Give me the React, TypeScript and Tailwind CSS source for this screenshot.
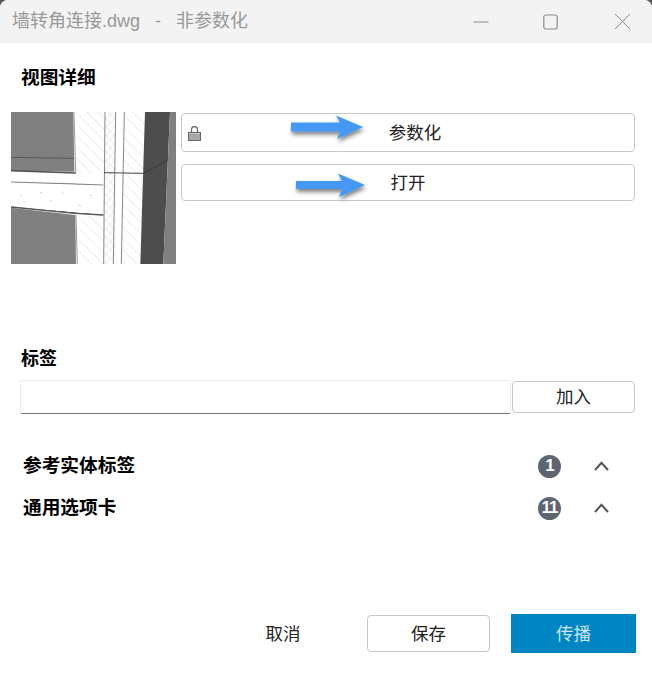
const serif = '"Liberation Serif", "Noto Sans CJK SC", serif';

function Arrow({ className, d }: { className: string; d: string }) {
  return (
    <svg className={`absolute pointer-events-none ${className}`} width="80" height="32" viewBox="0 0 80 32">
      <defs>
        <filter id="arrowShadow" x="-20%" y="-40%" width="140%" height="200%">
          <feDropShadow dx="1" dy="3" stdDeviation="2" floodColor="#000" floodOpacity="0.5" />
        </filter>
      </defs>
      <path d={d} fill="#4499f5" filter="url(#arrowShadow)" />
    </svg>
  );
}

function Thumbnail() {
  return (
    <svg width="165" height="152" viewBox="33 21 495 456" className="shrink-0">
      <defs>
        <pattern id="hatch" width="24" height="24" patternUnits="userSpaceOnUse" patternTransform="rotate(-45)">
          <line x1="0" y1="0" x2="0" y2="24" stroke="#d2d2d2" strokeWidth="2.5" />
        </pattern>
        <pattern id="cross" width="18" height="18" patternUnits="userSpaceOnUse" patternTransform="rotate(45)">
          <path d="M0 0V18M0 0H18" stroke="#d6d6d6" strokeWidth="2.5" fill="none" />
        </pattern>
      </defs>
      <rect x="33" y="21" width="495" height="456" fill="#fff" />
      {/* walls */}
      <path d="M33 21H220L223 200L33 197Z" fill="#808080" />
      <path d="M33 157L221 160" stroke="#444" strokeWidth="2" />
      <path d="M33 308L226 330L228 477H33Z" fill="#808080" />
      <path d="M228 21H315V205H228Z M235 330H310V477H235Z" fill="url(#hatch)" />
      <path d="M315 21H347V477H310V205Z" fill="url(#cross)" />
      <path d="M372 21H435V205H372Z M368 205H430L422 477H362Z" fill="url(#hatch)" />
      {/* right block */}
      <path d="M435 21H510L490 477H421Z" fill="#4d4d4d" />
      <path d="M510 21H528V477H490Z" fill="#808080" />
      <path d="M432 204L503 165" stroke="#2e2e2e" strokeWidth="2" />
      {/* beam edges and speckle */}
      <path d="M33 197L228 204" stroke="#555" strokeWidth="5" />
      <path d="M33 231L228 237L310 240" stroke="#444" strokeWidth="2" />
      <path d="M33 306L225 325L311 330" stroke="#555" strokeWidth="4" />
      <path d="M60 270l6 3M120 262l8 4M185 262l6 4M235 300l8 3M70 290l5 2M150 285l5 3M270 270l6 2" stroke="#d0d0d0" strokeWidth="3" />
      <path d="M222 21L227 205M228 330L232 477" stroke="#999" strokeWidth="3" />
      <path d="M315 21L311 477M347 21L340 477M373 21L364 477" stroke="#888" strokeWidth="3" />
      <path d="M312 203L431 205" stroke="#444" strokeWidth="3" />
    </svg>
  );
}

function LockIcon() {
  return (
    <svg width="13" height="15" viewBox="0 0 13 15" className="shrink-0">
      <path d="M3.5 6.5V3.5a3 3 0 0 1 6 0V6.5" fill="none" stroke="#666" strokeWidth="1.3" />
      <rect x="0.5" y="6.5" width="12" height="8" fill="#c4c4c4" stroke="#666" />
      <path d="M1 9H12M1 11H12M1 13H12" stroke="#8a8a8a" />
    </svg>
  );
}

function CountRow({ label, count }: { label: string; count: number }) {
  return (
    <div className="flex items-center h-6 ml-[12px] pr-[26px]">
      <span className="flex-1 text-[18.7px] font-bold text-black pt-px">{label}</span>
      <span
        className="w-[23px] h-[23px] rounded-full bg-[#5c6570] text-white text-[17px] font-bold flex items-center justify-center tracking-[-1px]"
        style={{ fontFamily: '"Liberation Sans", sans-serif' }}
      >
        {count}
      </span>
      <svg width="15" height="10" viewBox="0 0 15 10" className="ml-[33px]">
        <path d="M1 9L7.5 1.8L14 9" fill="none" stroke="#555" strokeWidth="2" />
      </svg>
    </div>
  );
}

export default function App() {
  return (
    <div className="h-screen bg-[#555]" style={{ fontFamily: serif }}>
      <div className="h-full bg-white rounded-t-[8px] overflow-hidden flex flex-col">
        {/* Title bar */}
        <div className="h-[43px] shrink-0 bg-[#f3f3f3] flex items-center pl-[12px] text-[#999] text-[18px]" style={{ fontFamily: '"Liberation Sans", "Noto Sans CJK SC", sans-serif' }}>
          <span className="flex-1 whitespace-pre">墙转角连接.dwg   -   非参数化</span>
          <svg width="16" height="16" viewBox="0 0 16 16" className="mr-[54px]">
            <path d="M0.5 8H15.5" stroke="#8a8a8a" strokeWidth="1" />
          </svg>
          <svg width="15" height="16" viewBox="0 0 15 16" className="mr-[56px]">
            <rect x="0.8" y="1" width="13.4" height="14" rx="2" fill="none" stroke="#8a8a8a" strokeWidth="1.2" />
          </svg>
          <svg width="17" height="17" viewBox="0 0 17 17" className="mr-[21px]">
            <path d="M1 1L16 16M16 1L1 16" stroke="#8a8a8a" strokeWidth="1" />
          </svg>
        </div>

        <div className="flex-1 flex flex-col pl-[11px] pr-[17px]">
          <h2 className="mt-[23px] ml-[10px] h-6 leading-6 text-[18.7px] font-bold text-black">视图详细</h2>

          {/* Preview + actions */}
          <div className="mt-[22px] flex gap-[5px] h-[152px]">
            <Thumbnail />
            <div className="flex-1 pt-px flex flex-col gap-3">
              <div className="relative">
                <button className="w-full h-[39px] border border-[#c8c8c8] rounded-[4px] bg-white flex items-center pl-[6px] pt-px text-[17.5px] text-[#222]">
                  <LockIcon />
                  <span className="flex-1 text-center pr-[5px]">参数化</span>
                </button>
                <Arrow className="left-[108px] top-px" d="M2 8.5 L51 8.5 L47 1.5 L74 13 L48 25 L51 17.5 L2 17.5 Z" />
              </div>
              <div className="relative">
                <button className="w-full h-[37px] border border-[#c8c8c8] rounded-[4px] bg-white pt-px text-[17.5px] text-[#222]">打开</button>
                <Arrow className="left-[113px] top-[8px]" d="M2 9 L48 9 L44 1.5 L71 13 L45 25 L48 17 L2 17 Z" />
              </div>
            </div>
          </div>

          {/* Tags */}
          <h2 className="mt-[82px] ml-[10px] h-6 leading-6 text-[18px] font-bold text-black pt-px">标签</h2>
          <div className="mt-[10px] ml-[9px] flex items-center gap-px">
            <input className="w-[491px] h-[34px] border border-[#ececec] border-b-[#777] rounded-[2px] bg-white outline-none px-2" />
            <button className="flex-1 h-[32px] border border-[#c8c8c8] rounded-[4px] bg-white text-[17.5px] text-[#222]">加入</button>
          </div>

          <div className="mt-[40px] flex flex-col gap-[18px]">
            <CountRow label="参考实体标签" count={1} />
            <CountRow label="通用选项卡" count={11} />
          </div>

          {/* Footer */}
          <div className="mt-auto mb-[20px] mr-[-1px] flex items-center justify-end">
            <button className="w-[68px] h-[38px] pt-px text-[17.5px] text-[#222] mr-[50px]">取消</button>
            <button className="w-[123px] h-[37px] border border-[#c8c8c8] rounded-[4px] bg-white pt-px text-[17.5px] text-[#222] mr-[21px]">保存</button>
            <button className="w-[125px] h-[39px] bg-[#0085c3] pt-px text-[17.5px] text-[#cfe6f3]">传播</button>
          </div>
        </div>
      </div>
    </div>
  );
}
